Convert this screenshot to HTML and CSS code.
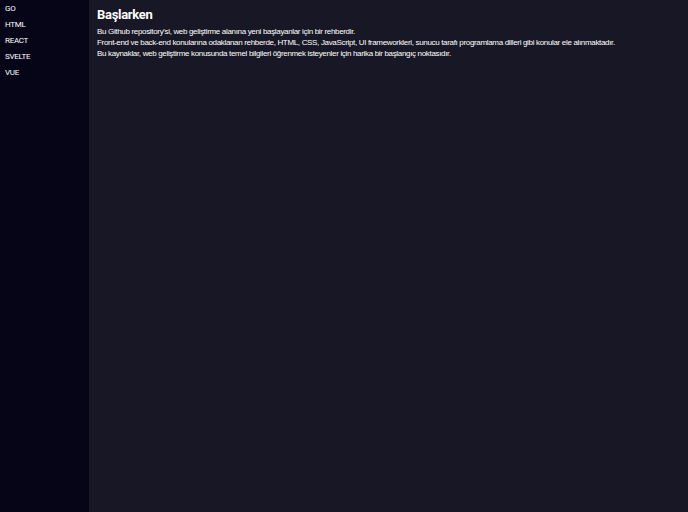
FILE: index.html
```html
<!DOCTYPE html>
<html lang="tr">
<head>
<meta charset="utf-8">
<link rel="stylesheet" href="styles.css">
</head>
<body>
<div class="layout">
  <nav class="sidebar">
    <a class="nav-item">GO</a>
    <a class="nav-item">HTML</a>
    <a class="nav-item">REACT</a>
    <a class="nav-item">SVELTE</a>
    <a class="nav-item">VUE</a>
  </nav>
  <main class="content">
    <h1 class="title">Başlarken</h1>
    <p class="text">Bu Github repository'si, web geliştirme alanına yeni başlayanlar için bir rehberdir.<br>Front-end ve back-end konularına odaklanan rehberde, HTML, CSS, JavaScript, UI frameworkleri, sunucu tarafı programlama dilleri gibi konular ele alınmaktadır.<br>Bu kaynaklar, web geliştirme konusunda temel bilgileri öğrenmek isteyenler için harika bir başlangıç noktasıdır.</p>
  </main>
</div>
</body>
</html>
```
FILE: styles.css
```css
html, body {
  margin: 0;
  padding: 0;
  height: 100%;
}
body {
  font-family: "Liberation Sans", Arial, sans-serif;
  color: #ffffff;
  background: #181726;
}
.layout {
  display: flex;
  height: 100%;
}
.sidebar {
  width: 89px;
  flex: none;
  background: #060518;
  display: flex;
  flex-direction: column;
  padding: 1px 0 0 5px;
  box-sizing: border-box;
}
.nav-item {
  font-family: Roboto, "Liberation Sans", Arial, sans-serif;
  font-size: 8px;
  line-height: 16px;
  letter-spacing: -0.3px;
  color: #ffffff;
}
.content {
  flex: 1;
  padding: 7px 8px;
}
.title {
  font-family: Roboto, "Liberation Sans", Arial, sans-serif;
  font-size: 13px;
  font-weight: bold;
  letter-spacing: -0.3px;
  margin: 0 0 3px 0;
  line-height: 16px;
}
.text {
  font-size: 8px;
  line-height: 11px;
  letter-spacing: -0.33px;
  margin: 0;
}
```
